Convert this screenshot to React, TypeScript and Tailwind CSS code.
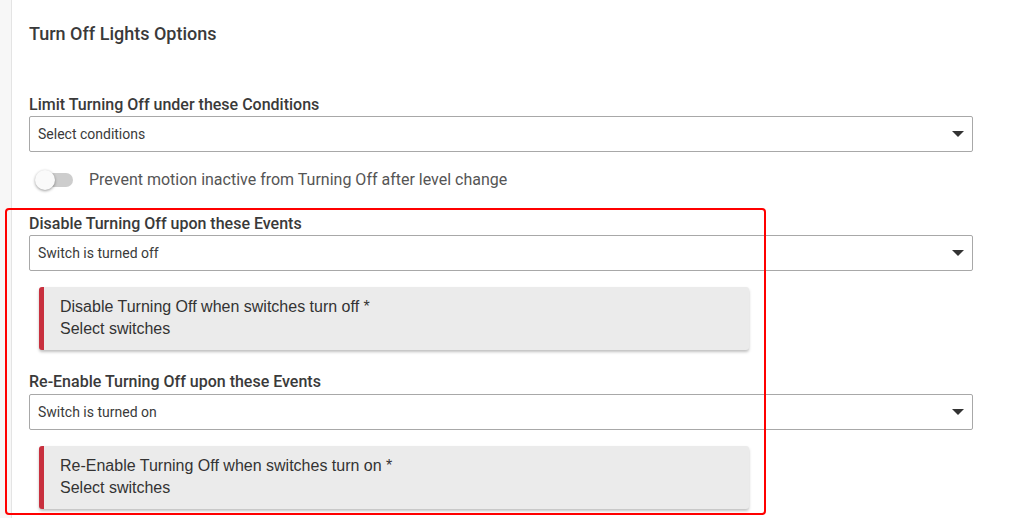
function Caret() {
  return (
    <svg width="12" height="6" viewBox="0 0 12 6" className="shrink-0">
      <path d="M0 0 H12 L6 6 Z" fill="#333" />
    </svg>
  );
}

function SelectBox({ value }: { value: string }) {
  return (
    <div className="h-[36px] w-[944px] border border-[#a8a8a8] rounded-[2px] flex items-center justify-between pl-[8px] pr-[8px] bg-white">
      <span className="text-[14px] leading-[18px] -mt-[1px] text-[#3a3a3a] font-['Roboto',sans-serif]">{value}</span>
      <Caret />
    </div>
  );
}

function Alert({ title }: { title: string }) {
  return (
    <div className="ml-[10px] w-[710px] h-[63px] bg-[#ebebeb] border-l-[5px] border-[#c8303e] rounded-[3px] shadow-[0_2px_3px_rgba(0,0,0,0.25)] pl-[16px] pt-[9px] text-[16px] leading-[22px] text-[#333] font-['Liberation_Sans',Arial,sans-serif]">
      <div>{title}</div>
      <div>Select switches</div>
    </div>
  );
}

export default function App() {
  const label = "text-[16px] leading-[20px] font-medium text-[#3a3a3a] font-['Roboto',sans-serif]";
  return (
    <div className="relative w-[1022px] h-[518px] overflow-hidden bg-white flex">
      <div className="w-[12px] bg-[#f7f7f7] border-r border-[#e4e4e4]" />
      <div className="pl-[17px] pt-[22px] flex flex-col">
        <h1 className="text-[18px] leading-[24px] font-medium text-[#3a3a3a] font-['Roboto',sans-serif]">
          Turn Off Lights Options
        </h1>

        <div className={`mt-[49px] ${label}`}>Limit Turning Off under these Conditions</div>
        <div className="mt-[1px]">
          <SelectBox value="Select conditions" />
        </div>

        <div className="mt-[16px] h-[24px] flex items-center">
          <div className="relative ml-[7px] w-[37px] h-[14px] rounded-full bg-[#cdcdcd]">
            <div className="absolute -left-[1px] -top-[3px] w-[20px] h-[20px] rounded-full bg-[#fafafa] shadow-[0_1px_3px_rgba(0,0,0,0.4)]" />
          </div>
          <span className="ml-[16px] text-[16px] text-[#555] font-['Roboto',sans-serif]">
            Prevent motion inactive from Turning Off after level change
          </span>
        </div>

        <div className={`mt-[22px] ${label}`}>Disable Turning Off upon these Events</div>
        <div className="mt-[1px]">
          <SelectBox value="Switch is turned off" />
        </div>
        <div className="mt-[16px]">
          <Alert title="Disable Turning Off when switches turn off *" />
        </div>

        <div className={`mt-[22px] ${label}`}>Re-Enable Turning Off upon these Events</div>
        <div className="mt-[2px]">
          <SelectBox value="Switch is turned on" />
        </div>
        <div className="mt-[16px]">
          <Alert title="Re-Enable Turning Off when switches turn on *" />
        </div>
      </div>

      <div className="absolute left-[5px] top-[208px] w-[761px] h-[307px] border-2 border-[#ff0000] rounded-[4px] pointer-events-none" />
    </div>
  );
}
